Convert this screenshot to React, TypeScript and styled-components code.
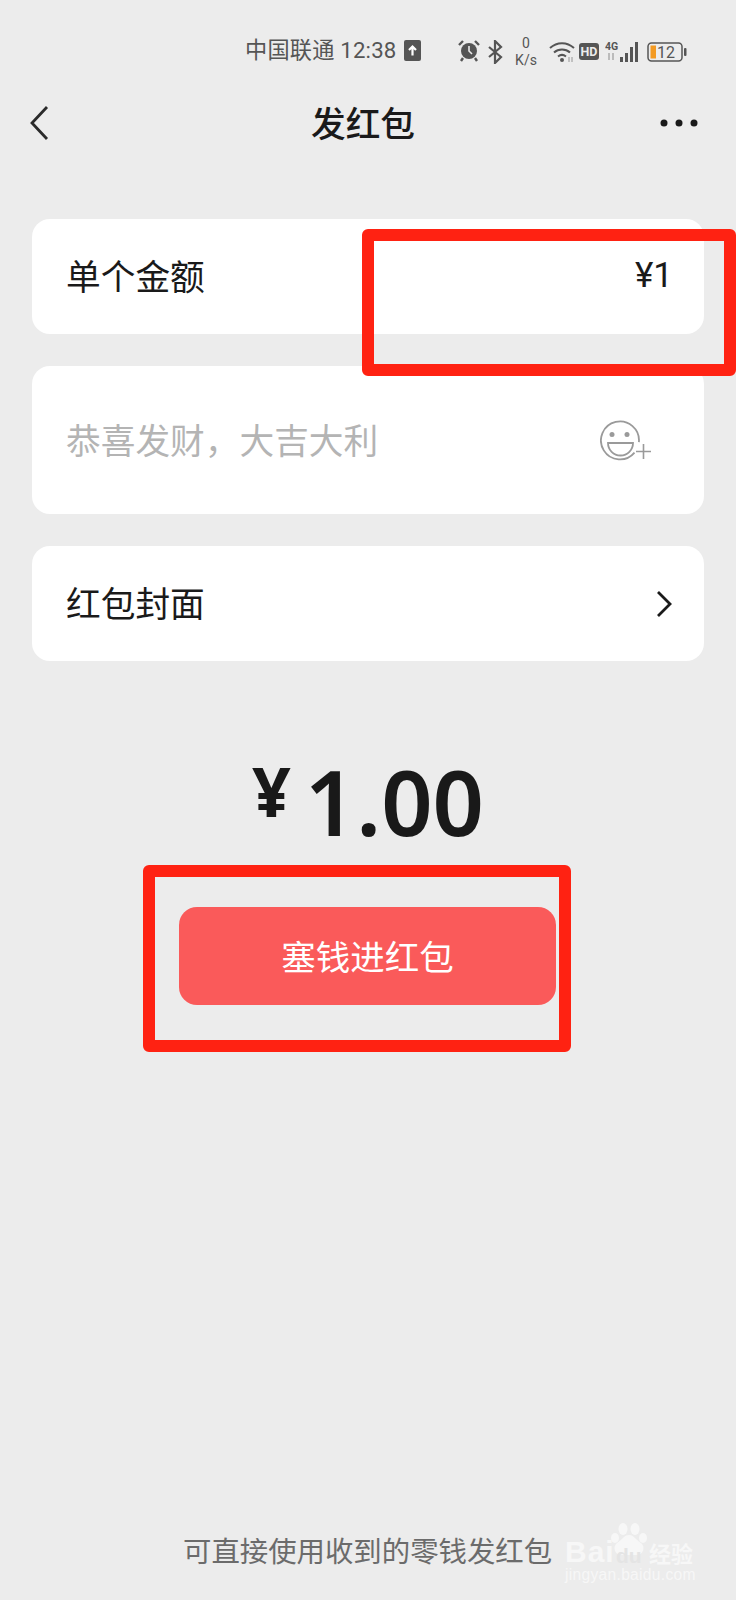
import React from "react";
import styled, { createGlobalStyle } from "styled-components";

const CJK = `"Noto Sans CJK SC", "Noto Sans", sans-serif`;

const Global = createGlobalStyle`
  html, body { margin: 0; padding: 0; background: #ececec; }
  * { box-sizing: border-box; }
`;

const Page = styled.div`
  position: relative;
  width: 736px;
  height: 1600px;
  overflow: hidden;
  background: #ececec;
  font-family: ${CJK};
  color: #1a1a1a;
`;

const StatusBar = styled.div`
  height: 101px;
  padding: 34px 0 0 245px;
  display: flex;
  align-items: flex-start;
  color: #555;
`;

const Carrier = styled.span`
  font-family: "Roboto", ${CJK};
  font-size: 22.2px;
  line-height: 32px;
  white-space: nowrap;
  width: 151px;
  letter-spacing: 0.2px;
`;

const StatusIcon = styled.svg<{ $gap?: number; $top: number }>`
  display: block;
  flex: none;
  margin-left: ${(p) => p.$gap ?? 0}px;
  margin-top: ${(p) => p.$top}px;
`;

const Speed = styled.div`
  width: 30px;
  margin-left: 8px;
  margin-top: 1px;
  font-family: "Roboto", sans-serif;
  font-size: 14px;
  line-height: 17px;
  text-align: center;
  white-space: nowrap;
`;

const NavBar = styled.div`
  height: 44px;
  padding: 0 38px 0 29px;
  display: flex;
  align-items: center;
  justify-content: space-between;
`;

const Title = styled.div`
  font-size: 34.7px;
  font-weight: 500;
  line-height: 42px;
  margin: -2px 0 0 15px;
`;

const Cards = styled.div`
  margin: 74px 32px 0;
  display: flex;
  flex-direction: column;
  gap: 32px;
`;

const Card = styled.div<{ $h: number; $pad: number }>`
  height: ${(p) => p.$h}px;
  background: #fff;
  border-radius: 18px;
  padding: ${(p) => p.$pad}px 34px 0 34px;
  display: flex;
  align-items: flex-start;
  justify-content: space-between;
  font-size: 34.7px;
  line-height: 42px;
`;

const Placeholder = styled.span`
  color: #b4b4b4;
`;

const Value = styled.span`
  font-family: "Roboto", sans-serif;
  font-size: 35px;
  margin: 1px -3px 0 0;
`;

const EmojiIcon = styled.svg`
  flex: none;
  margin: 2px 18px 0 0;
`;

const Chevron = styled.svg`
  flex: none;
  margin: 9px -3px 0 0;
`;

const Amount = styled.div`
  margin-top: 85px;
  height: 122px;
  display: flex;
  justify-content: center;
  align-items: flex-start;
  color: #191919;
  font-family: "Noto Sans", sans-serif;
`;

const Yen = styled.span`
  font-size: 68px;
  font-weight: 700;
  line-height: 90px;
  margin-right: 14px;
`;

const Digits = styled.span`
  font-size: 90px;
  font-weight: 600;
  line-height: 110px;
`;

const PayButton = styled.div`
  margin: 39px 0 0 179px;
  width: 377px;
  height: 98px;
  padding-bottom: 2px;
  border-radius: 18px;
  background: #fa5a5a;
  color: #fff;
  font-size: 34.5px;
  display: flex;
  align-items: center;
  justify-content: center;
`;

const Footer = styled.div`
  margin: 525px 0 0 183px;
  font-size: 28.4px;
  line-height: 40px;
  color: #6b6b6b;
  white-space: nowrap;
`;

const Frame = styled.div<{ $x: number; $y: number; $w: number; $h: number }>`
  position: absolute;
  left: ${(p) => p.$x}px;
  top: ${(p) => p.$y}px;
  width: ${(p) => p.$w}px;
  height: ${(p) => p.$h}px;
  border: 12px solid #ff2212;
  border-radius: 6px;
`;

const Watermark = styled.div`
  position: absolute;
  left: 563px;
  top: 1520px;
  width: 136px;
  height: 70px;
  color: #f7f7f7;
  font-family: "Liberation Sans", sans-serif;
`;

const Brand = styled.div`
  position: absolute;
  left: 2px;
  top: 15px;
  font-size: 30px;
  font-weight: 700;
  line-height: 34px;
  letter-spacing: 1px;
  white-space: nowrap;
`;

const BrandDu = styled.span`
  position: absolute;
  left: 51px;
  top: 9px;
  font-size: 21px;
  line-height: 24px;
  letter-spacing: 0;
  color: #e4e4e4;
`;

const BrandCn = styled.span`
  position: absolute;
  left: 84px;
  top: 2px;
  font-family: ${CJK};
  font-size: 22px;
  font-weight: 700;
  line-height: 30px;
  letter-spacing: 0;
  white-space: nowrap;
`;

const BrandUrl = styled.div`
  position: absolute;
  left: 2px;
  top: 44px;
  font-size: 15.6px;
  line-height: 22px;
  letter-spacing: 0.3px;
  white-space: nowrap;
`;

const Paw = styled.svg`
  position: absolute;
  left: 46px;
  top: 1px;
`;

export default function App() {
  return (
    <Page>
      <Global />
      <StatusBar>
        <Carrier>中国联通 12:38</Carrier>
        <StatusIcon width="17" height="21" viewBox="0 0 17 21" $gap={8} $top={6}>
          <rect width="17" height="21" rx="2" fill="#555" />
          <path d="M8.5 15.500V6.500M5 10 8.500 6.500 12 10" stroke="#fff" strokeWidth="2.200" fill="none" />
        </StatusIcon>
        <StatusIcon width="22" height="24" viewBox="0 0 22 24" $gap={37} $top={5}>
          <circle cx="11" cy="12" r="8" fill="#555" />
          <path d="M1 6 5 2M21 6l-4-4M5 19l-2 3M17 19l2 3" stroke="#555" strokeWidth="2.400" />
          <path d="M11 7v5l3 3" stroke="#ececec" strokeWidth="1.600" fill="none" />
        </StatusIcon>
        <StatusIcon width="16" height="24" viewBox="0 0 16 24" $gap={7} $top={6}>
          <path d="M2 7l12 10-6 6V1l6 6L2 17" stroke="#555" strokeWidth="2.200" fill="none" />
        </StatusIcon>
        <Speed>
          0
          <br />
          K/s
        </Speed>
        <StatusIcon width="26" height="22" viewBox="0 0 26 22" $gap={8} $top={7}>
          <path d="M1 7c7-6.500 17-6.500 24 0M5 11.500c4.500-4 11.500-4 16 0M9 15.500c2.500-2 5.500-2 8 0" stroke="#555" strokeWidth="2" fill="none" />
          <circle cx="13" cy="19" r="2" fill="#555" />
          <path d="M20 16v5M23 16v5" stroke="#aaa" strokeWidth="1.300" />
        </StatusIcon>
        <StatusIcon width="20" height="17" viewBox="0 0 20 17" $gap={4} $top={9}>
          <rect width="20" height="17" rx="3" fill="#555" />
          <text x="10" y="13" textAnchor="middle" fontFamily="Roboto, sans-serif" fontSize="12.500" fontWeight="700" fill="#ececec">HD</text>
        </StatusIcon>
        <StatusIcon width="33" height="24" viewBox="0 0 33 24" $gap={6} $top={6}>
          <text x="0" y="10" fontFamily="Roboto, sans-serif" fontSize="10.500" fontWeight="700" fill="#555">4G</text>
          <path d="M4 13v7M8 13v7" stroke="#aaa" strokeWidth="1.500" />
          <rect x="15" y="17" width="3" height="5" fill="#555" />
          <rect x="20" y="13" width="3" height="9" fill="#555" />
          <rect x="25" y="7" width="3" height="15" fill="#555" />
          <rect x="30" y="2" width="3" height="20" fill="#555" />
        </StatusIcon>
        <StatusIcon width="40" height="22" viewBox="0 0 40 22" $gap={9} $top={7}>
          <rect x="1" y="2" width="34" height="18" rx="3.500" fill="none" stroke="#555" strokeWidth="1.500" />
          <rect x="3.500" y="4.500" width="5.500" height="13" fill="#f39a22" />
          <text x="10" y="17" fontFamily="Roboto, sans-serif" fontSize="16" fill="#555">12</text>
          <rect x="37" y="7" width="2.500" height="8" rx="1" fill="#555" />
        </StatusIcon>
      </StatusBar>

      <NavBar>
        <svg width="22" height="36" viewBox="0 0 22 36">
          <path d="M18 2 3 18l15 16" stroke="#2a2a2a" strokeWidth="2.800" fill="none" />
        </svg>
        <Title>发红包</Title>
        <svg width="38" height="10" viewBox="0 0 38 10">
          <circle cx="4" cy="5" r="3.500" fill="#1a1a1a" />
          <circle cx="19" cy="5" r="3.500" fill="#1a1a1a" />
          <circle cx="34" cy="5" r="3.500" fill="#1a1a1a" />
        </svg>
      </NavBar>

      <Cards>
        <Card $h={115} $pad={35}>
          <span>单个金额</span>
          <Value>¥1</Value>
        </Card>
        <Card $h={148} $pad={52}>
          <Placeholder>恭喜发财，大吉大利</Placeholder>
          <EmojiIcon width="52" height="42" viewBox="0 0 52 42">
            <path d="M34.500 32.700A19 19 0 1 1 38.900 22.200" stroke="#9a9a9a" strokeWidth="1.800" fill="none" />
            <circle cx="12" cy="14.500" r="2.500" fill="#9a9a9a" />
            <circle cx="27" cy="14.500" r="2.500" fill="#9a9a9a" />
            <path d="M8 23h25c0 7-5.500 12.500-12.500 12.500S8 30 8 23z" stroke="#9a9a9a" strokeWidth="1.800" fill="none" />
            <path d="M36 31.500h15M43.500 24v15" stroke="#9a9a9a" strokeWidth="1.600" />
          </EmojiIcon>
        </Card>
        <Card $h={115} $pad={35}>
          <span>红包封面</span>
          <Chevron width="18" height="28" viewBox="0 0 18 28">
            <path d="M3 2l12 12L3 26" stroke="#1a1a1a" strokeWidth="2.800" fill="none" />
          </Chevron>
        </Card>
      </Cards>

      <Amount>
        <Yen>¥</Yen>
        <Digits>1.00</Digits>
      </Amount>

      <PayButton>塞钱进红包</PayButton>
      <Footer>可直接使用收到的零钱发红包</Footer>

      <Frame $x={362} $y={229} $w={374} $h={147} />
      <Frame $x={143} $y={865} $w={428} $h={187} />

      <Watermark>
        <Paw width="40" height="40" viewBox="0 0 40 40">
          <ellipse cx="6" cy="17" rx="4" ry="5" fill="#f7f7f7" />
          <ellipse cx="14" cy="8" rx="4.500" ry="6" fill="#f7f7f7" />
          <ellipse cx="26" cy="8" rx="4.500" ry="6" fill="#f7f7f7" />
          <ellipse cx="34" cy="17" rx="4" ry="5" fill="#f7f7f7" />
          <path d="M20 14c5 0 7 5 12 8 5 4 2 12-4 12H12c-6 0-9-8-4-12 5-3 7-8 12-8z" fill="#f7f7f7" />
        </Paw>
        <Brand>
          Bai
          <BrandDu>du</BrandDu>
          <BrandCn>经验</BrandCn>
        </Brand>
        <BrandUrl>jingyan.baidu.com</BrandUrl>
      </Watermark>
    </Page>
  );
}
